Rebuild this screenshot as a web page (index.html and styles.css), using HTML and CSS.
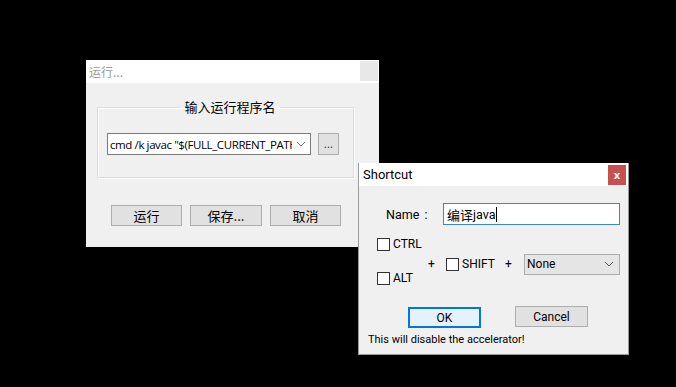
FILE: index.html
```html
<!DOCTYPE html>
<html>
<head>
<meta charset="utf-8">
<link rel="stylesheet" href="styles.css">
</head>
<body>
<div class="desktop">
  <div class="win run">
    <div class="titlebar">
      <span class="title inactive">运行...</span>
      <span class="close gray"></span>
    </div>
    <div class="body run-body">
      <fieldset class="group">
        <legend>输入运行程序名</legend>
        <div class="combo-row">
          <div class="combo">
            <span class="combo-text">cmd /k javac "$(FULL_CURRENT_PATH)"</span>
            <span class="combo-arrow"><svg width="10" height="6" viewBox="0 0 10 6"><path d="M1 1 L5 5 L9 1" fill="none" stroke="#777" stroke-width="1"/></svg></span>
          </div>
          <button class="btn dots">...</button>
        </div>
      </fieldset>
      <div class="run-buttons">
        <button class="btn cjk">运行</button>
        <button class="btn cjk">保存...</button>
        <button class="btn cjk">取消</button>
      </div>
    </div>
  </div>

  <div class="win shortcut">
    <div class="titlebar">
      <span class="title">Shortcut</span>
      <span class="close red">x</span>
    </div>
    <div class="body sc-body">
      <div class="name-row">
        <span class="name-label">Name :</span>
        <div class="name-input"><span class="cjk-inline">编译</span>java<span class="caret"></span></div>
      </div>
      <div class="keys">
        <div class="mods">
          <label class="chk"><span class="box"></span>CTRL</label>
          <label class="chk"><span class="box"></span>ALT</label>
        </div>
        <div class="keys-right">
          <span class="plus p1">+</span>
          <label class="chk shift"><span class="box"></span>SHIFT</label>
          <span class="plus p2">+</span>
          <div class="select">
            <span>None</span>
            <svg width="10" height="6" viewBox="0 0 10 6"><path d="M1 1 L5 5 L9 1" fill="none" stroke="#555" stroke-width="1"/></svg>
          </div>
        </div>
      </div>
      <div class="sc-buttons">
        <button class="btn ok">OK</button>
        <button class="btn cancel">Cancel</button>
      </div>
      <div class="warn">This will disable the accelerator!</div>
    </div>
  </div>
</div>
</body>
</html>
```

FILE: styles.css
```css
html, body {
  margin: 0;
  padding: 0;
  background: #000;
}
.desktop {
  position: relative;
  width: 676px;
  height: 387px;
  overflow: hidden;
  font-family: Roboto, "Noto Sans", "Noto Sans CJK SC", sans-serif;
  font-size: 11px;
  color: #000;
}
.win {
  position: absolute;
  background: #f0f0f0;
  display: flex;
  flex-direction: column;
  box-sizing: border-box;
}
.run {
  left: 86px;
  top: 60px;
  width: 293px;
  height: 187px;
}
.shortcut {
  left: 358px;
  top: 163px;
  width: 271px;
  height: 192px;
  border: 1px solid #9a9a9a;
  border-top: none;
}
.titlebar {
  height: 23px;
  background: #fff;
  display: flex;
  align-items: center;
  justify-content: space-between;
  flex: none;
}
.title {
  font-size: 12px;
  padding-left: 3px;
  line-height: 23px;
}
.title.inactive {
  color: #9a9a9a;
  font-family: "Noto Sans CJK SC", sans-serif;
}
.shortcut .title {
  font-family: Roboto, "Noto Sans", sans-serif;
  font-size: 13px;
  padding-left: 4px;
}
.close {
  width: 18px;
  height: 20px;
  margin-right: 1px;
  align-self: flex-start;
  margin-top: 1px;
}
.close.gray {
  background: #e8e8e8;
}
.close.red {
  background: #c75050;
  color: #fff;
  font-family: "DejaVu Sans", sans-serif;
  font-weight: bold;
  font-size: 10px;
  display: flex;
  align-items: center;
  justify-content: center;
  margin-top: 2px;
  margin-right: 2px;
  height: 20px;
}
.body {
  flex: 1;
  position: relative;
}
.run-body {
  padding: 17px 25px 0 11px;
  display: flex;
  flex-direction: column;
}
.group {
  margin: 0;
  padding: 19px 0 0 9px;
  height: 78px;
  box-sizing: border-box;
  border: 1px solid #dcdcdc;
  box-shadow: inset 1px 1px 0 #fff, 1px 1px 0 #fff;
  min-width: 0;
}
.group legend {
  margin: 0 auto;
  padding: 0 4px;
  font-family: "Noto Sans CJK SC", sans-serif;
  font-size: 13px;
  line-height: 14px;
}
.combo-row {
  display: flex;
  gap: 7px;
}
.combo {
  width: 204px;
  height: 22px;
  box-sizing: border-box;
  border: 1px solid #7a7a7a;
  background: #fff;
  display: flex;
  align-items: center;
  overflow: hidden;
}
.combo-text {
  flex: 1;
  min-width: 0;
  white-space: nowrap;
  overflow: hidden;
  padding-left: 2px;
  font-family: "Open Sans", "Noto Sans", sans-serif;
  font-size: 11.5px;
  letter-spacing: -0.4px;
}
.combo-arrow {
  width: 18px;
  flex: none;
  display: flex;
  justify-content: center;
  background: #fff;
}
.btn {
  font-family: inherit;
  margin: 0;
  padding: 0;
  background: #e1e1e1;
  border: 1px solid #adadad;
  box-sizing: border-box;
  color: #000;
  font-size: 12px;
}
.dots {
  width: 21px;
  height: 22px;
  line-height: 1;
  color: #333;
}
.run-buttons {
  display: flex;
  margin-top: 27px;
  gap: 8px;
  padding-left: 14px;
}
.run-buttons .btn {
  width: 71px;
  height: 21px;
  font-family: "Noto Sans CJK SC", sans-serif;
  font-size: 13px;
  line-height: 1;
}
.run-buttons .btn:nth-child(2) {
  width: 72px;
}
.sc-body {
  padding: 17px 8px 0 9px;
}
.name-row {
  display: flex;
  align-items: center;
  padding-left: 18px;
}
.name-label {
  width: 57px;
  font-size: 12.5px;
  word-spacing: 2px;
}
.name-input {
  width: 177px;
  height: 22px;
  box-sizing: border-box;
  border: 1px solid #3c86c8;
  background: #fff;
  display: flex;
  align-items: center;
  padding-left: 3px;
  font-size: 12.5px;
}
.cjk-inline {
  font-family: "Noto Sans CJK SC", sans-serif;
  font-size: 13px;
}
.caret {
  display: inline-block;
  width: 1px;
  height: 15px;
  background: #000;
  margin-left: 1px;
}
.keys {
  display: flex;
  align-items: center;
  margin-top: 12px;
  padding-left: 9px;
}
.mods {
  width: 46px;
  display: flex;
  flex-direction: column;
  gap: 20px;
}
.chk {
  display: flex;
  align-items: center;
  font-size: 12px;
  gap: 3px;
}
.box {
  width: 13px;
  height: 13px;
  flex: none;
  box-sizing: border-box;
  border: 1px solid #333;
  background: #fff;
}
.keys-right {
  display: flex;
  align-items: center;
  margin-top: 6px;
}
.plus {
  width: 7px;
  text-align: center;
  font-size: 12px;
}
.p1 {
  margin-left: 5px;
}
.shift {
  margin-left: 11px;
  width: 45px;
}
.p2 {
  margin-left: 14px;
}
.select {
  margin-left: 12px;
  width: 96px;
  height: 21px;
  box-sizing: border-box;
  border: 1px solid #acacac;
  background: #e5e5e5;
  display: flex;
  align-items: center;
  justify-content: space-between;
  padding: 0 5px 0 2px;
  font-size: 12px;
}
.sc-buttons {
  display: flex;
  margin-top: 22px;
  padding-left: 40px;
  gap: 34px;
  align-items: flex-start;
}
.ok {
  width: 73px;
  height: 21px;
  border: 2px solid #0078d7;
  background: #e5f1fb;
}
.cancel {
  width: 73px;
  height: 21px;
  margin-top: -1px;
}
.warn {
  margin-top: 5px;
  font-size: 11px;
}
```
